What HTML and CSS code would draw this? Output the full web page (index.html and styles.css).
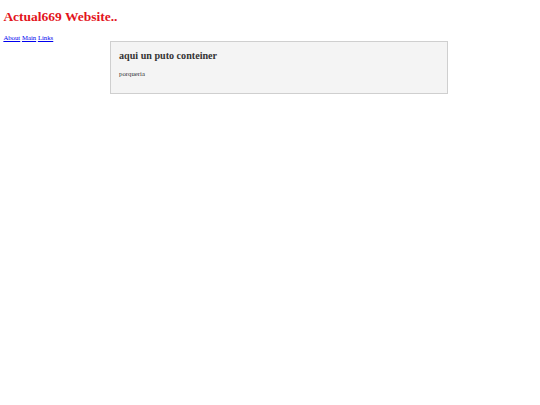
FILE: index.html
```html
<!DOCTYPE html>
<html>
<head>
<meta charset="utf-8">
<title>Actual669 Website..</title>
<link rel="stylesheet" href="styles.css">
</head>
<body>
<h1 class="site-title">Actual669 Website..</h1>
<nav class="nav"><a href="#">About</a> <a href="#">Main</a> <a href="#">Links</a></nav>
<div class="container">
  <h2 class="container-title">aqui un puto conteiner</h2>
  <p class="container-text">porqueria</p>
</div>
</body>
</html>
```
FILE: styles.css
```css
body {
  margin: 3.375px;
  font-family: "Liberation Serif", "Times New Roman", serif;
  font-size: 6.75px;
  background: #fff;
  color: #000;
}
.site-title {
  font-size: 13.5px;
  font-weight: bold;
  color: #e3141c;
  margin: 6px 0 9px 0;
}
.nav a {
  color: #0000ee;
  text-decoration: underline;
}
.container {
  margin-left: 20%;
  width: 60%;
  background: #f4f4f4;
  border: 1px solid #cfcfcf;
  padding: 8px 8px 9px 8px;
}
.container-title {
  font-size: 10.125px;
  font-weight: bold;
  color: #333;
  margin: 0 0 8.4px 0;
}
.container-text {
  margin: 6.75px 0;
  color: #333;
}
```
